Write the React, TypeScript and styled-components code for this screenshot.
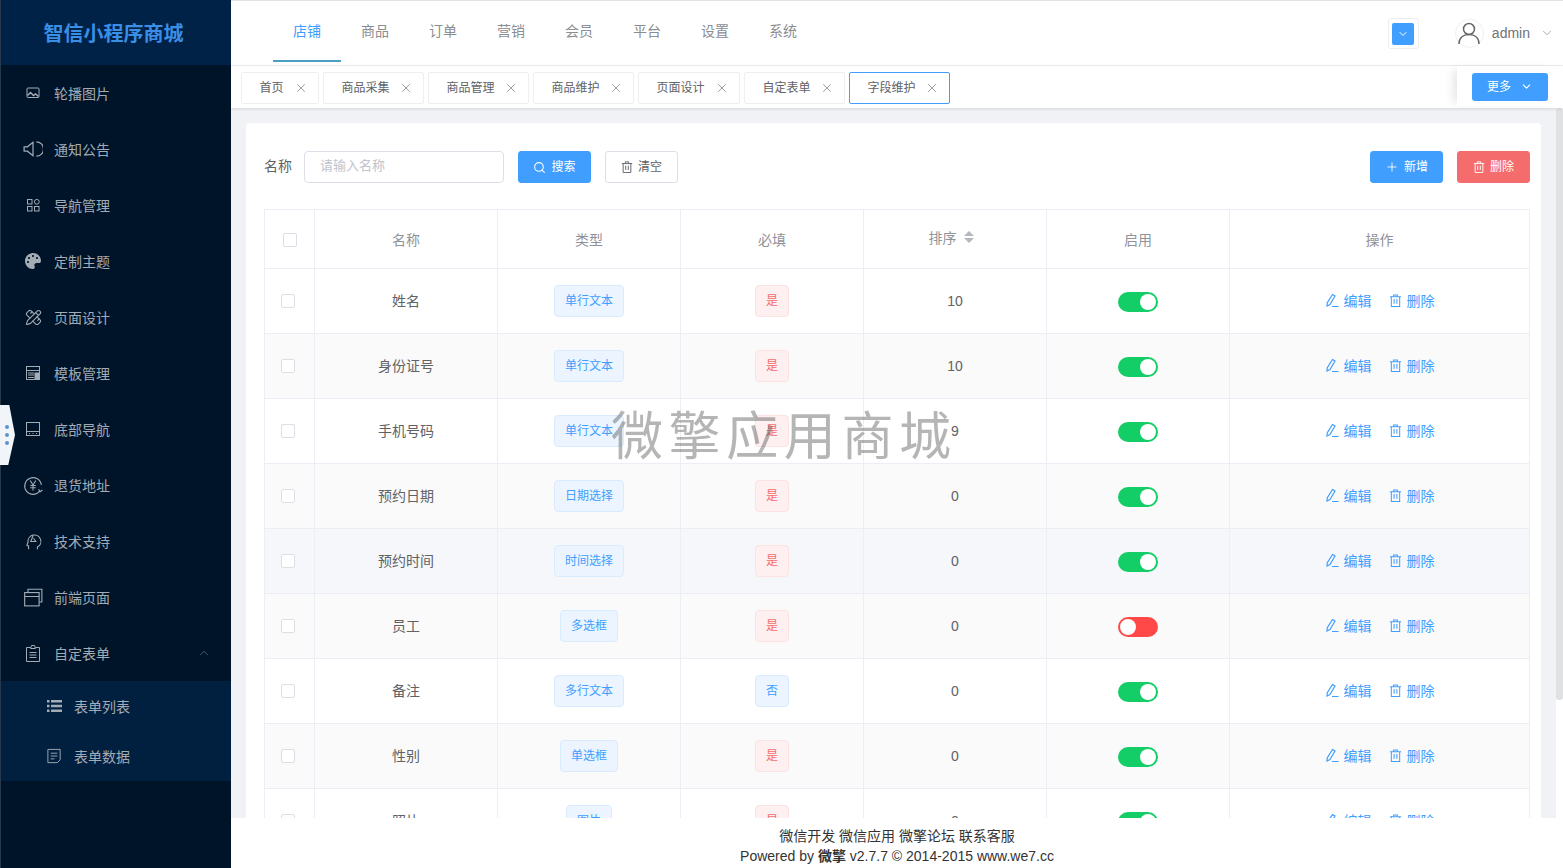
import React from "react";
import styled, { createGlobalStyle } from "styled-components";
import { ChevronDown, ChevronUp, PencilRuler, Plus, Search, X } from "lucide-react";
import { FaPalette } from "react-icons/fa";

const GlobalStyle = createGlobalStyle`
  html, body, #root {
    height: 100%;
    margin: 0;
  }
  body {
    font-family: "Liberation Sans", "Noto Sans CJK SC", sans-serif;
    font-size: 14px;
    color: #606266;
    overflow: hidden;
  }
  * {
    box-sizing: border-box;
  }
`;

const Page = styled.div`
  position: relative;
  display: flex;
  height: 868px;
  overflow: hidden;
`;

const Sidebar = styled.aside`
  flex: 0 0 231px;
  background: #001429;
  border-left: 1px solid #26384a;
`;

const Brand = styled.div`
  height: 65px;
  display: flex;
  align-items: center;
  justify-content: center;
  padding: 0 5px 1px 0;
  background: #012247;
  color: #3a8ee6;
  font-size: 20px;
  font-weight: 700;
  margin-bottom: 1px;
`;

const MenuItem = styled.div`
  height: 56px;
  display: flex;
  align-items: center;
  position: relative;
  padding: 0 0 2px 22px;
  color: #a3abb5;
`;

const MenuIcon = styled.span`
  width: 20px;
  height: 20px;
  margin-right: 11px;
  display: flex;
  align-items: center;
  justify-content: center;
  color: #a3abb5;
`;

const MenuArrow = styled.span`
  position: absolute;
  right: 20px;
  top: 20px;
  display: flex;
  color: #6d7884;
`;

const SubMenu = styled.div`
  background: #012040;
  margin-top: -1px;
`;

const SubItem = styled(MenuItem)`
  height: 50px;
  padding: 0 0 0 44px;
`;

const SubIcon = styled(MenuIcon)`
  width: 18px;
  margin-right: 11px;
`;

const Main = styled.div`
  flex: 1;
  min-width: 0;
  display: flex;
  flex-direction: column;
`;

const TopBar = styled.header`
  flex: 0 0 66px;
  display: flex;
  align-items: flex-start;
  background: #fff;
  border-top: 1px solid #e2e2e2;
  border-bottom: 1px solid #eceef1;
  padding-left: 42px;
`;

const NavItem = styled.div<{ $active?: boolean }>`
  width: 68px;
  height: 61px;
  line-height: 60px;
  text-align: center;
  color: ${({ $active }) => ($active ? "#409eff" : "#8a8d92")};
  border-bottom: 2px solid ${({ $active }) => ($active ? "#4b9fc4" : "transparent")};
`;

const TopRight = styled.div`
  margin-left: auto;
  display: flex;
  align-items: center;
  height: 64px;
  padding-right: 9px;
`;

const ThemeBox = styled.div`
  width: 31px;
  height: 31px;
  display: flex;
  align-items: center;
  justify-content: center;
  border: 1px solid #eeeeee;
  border-radius: 3px;
  margin-right: 36px;
  margin-top: 1px;
`;

const ThemeSwatch = styled.div`
  width: 22px;
  height: 22px;
  border-radius: 2px;
  background: #409eff;
  color: #fff;
  display: flex;
  align-items: center;
  justify-content: center;
`;

const Avatar = styled.div`
  width: 29px;
  height: 29px;
  border-radius: 50%;
  border: 1px solid #f0f0f0;
  display: flex;
  align-items: center;
  justify-content: center;
  margin-right: 8px;
  color: #666;
`;

const UserName = styled.span`
  color: #707276;
  margin-right: 10px;
`;

const TabBar = styled.div`
  flex: 0 0 42px;
  position: relative;
  display: flex;
  align-items: flex-start;
  gap: 4px;
  padding: 6px 0 0 10px;
  background: #fff;
  box-shadow: 0 1px 3px rgba(0, 0, 0, 0.12);
  z-index: 1;
`;

const Tab = styled.div<{ $active?: boolean; $width: number }>`
  width: ${({ $width }) => $width}px;
  height: 32px;
  display: flex;
  align-items: center;
  padding: 0 10px 3px 17.5px;
  font-size: 12px;
  color: #606266;
  border: 1px solid ${({ $active }) => ($active ? "#409eff" : "#eeeff2")};
  border-radius: 2px;
  background: #fff;
  justify-content: space-between;
`;

const TabClose = styled.span`
  display: flex;
  margin-bottom: -3px;
  color: #666;
`;

const MoreArea = styled.div`
  position: absolute;
  top: 0;
  right: 0;
  width: 106px;
  height: 40px;
  background: #fff;
  box-shadow: -8px 0 10px -4px rgba(0, 0, 0, 0.1);
  padding: 7px 0 0 15px;
`;

const MoreButton = styled.div`
  width: 76px;
  height: 28px;
  border-radius: 3px;
  background: #409eff;
  color: #fff;
  font-size: 12px;
  line-height: 16px;
  display: flex;
  align-items: center;
  justify-content: center;
  gap: 9px;
  padding-bottom: 1px;
`;

const Content = styled.div`
  flex: 1;
  min-height: 0;
  position: relative;
  overflow: hidden;
  background: #f0f2f5;
  padding: 15px 22px 0 15px;
`;

const ScrollTrack = styled.div`
  position: absolute;
  top: 0;
  right: 0;
  bottom: 0;
  width: 7px;
  background: #fff;
`;

const ScrollThumb = styled.div`
  width: 7px;
  height: 592px;
  background: #dfe1e3;
  border-radius: 3px;
`;

const Card = styled.div`
  background: #fff;
  border-radius: 4px;
  padding: 28px 11px 0 18px;
`;

const FilterRow = styled.div`
  display: flex;
  align-items: center;
  height: 32px;
  margin-bottom: 26px;
`;

const FilterLabel = styled.span`
  width: 40px;
  padding-bottom: 4px;
`;

const NameInput = styled.input`
  width: 200px;
  height: 32px;
  padding: 0 15px 3px;
  border: 1px solid #dcdfe6;
  border-radius: 4px;
  font: inherit;
  font-size: 13px;
  margin-right: 14px;
  &::placeholder {
    color: #c0c4cc;
  }
`;

const Button = styled.div<{ $kind: "primary" | "plain" | "danger" }>`
  width: 73px;
  height: 32px;
  display: flex;
  align-items: center;
  justify-content: center;
  gap: 5px;
  padding-bottom: 3px;
  font-size: 12px;
  border-radius: 3px;
  color: ${({ $kind }) => ($kind === "plain" ? "#606266" : "#fff")};
  background: ${({ $kind }) =>
    $kind === "primary" ? "#409eff" : $kind === "danger" ? "#f56c6c" : "#fff"};
  border: 1px solid
    ${({ $kind }) =>
      $kind === "primary" ? "#409eff" : $kind === "danger" ? "#f56c6c" : "#dcdfe6"};
  svg {
    margin-bottom: -3px;
  }
`;

const ClearButton = styled(Button)`
  margin-left: 14px;
`;

const RightButtons = styled.div`
  margin-left: auto;
  display: flex;
  gap: 14px;
`;

const Table = styled.table`
  width: 1265px;
  table-layout: fixed;
  border-collapse: collapse;
`;

const HeadCell = styled.th`
  height: 59px;
  padding: 0;
  font-weight: 400;
  color: #909399;
  text-align: center;
  border: 1px solid #ebeef5;
`;

const Row = styled.tr<{ $bg: string }>`
  background: ${({ $bg }) => $bg};
`;

const Cell = styled.td<{ $lift?: boolean }>`
  height: 65px;
  padding: 0 0 ${({ $lift }) => ($lift ? "2px" : "0")};
  text-align: center;
  border: 1px solid #ebeef5;
`;

const Check = styled.span`
  display: inline-block;
  width: 14px;
  height: 14px;
  vertical-align: middle;
  border: 1px solid #dcdfe6;
  border-radius: 2px;
  background: #fff;
`;

const RowCheck = styled(Check)`
  margin-right: 4px;
`;

const Tag = styled.span<{ $tone: "blue" | "red" }>`
  display: inline-block;
  height: 32px;
  line-height: 30px;
  padding: 0 10px;
  font-size: 12px;
  border-radius: 4px;
  color: ${({ $tone }) => ($tone === "blue" ? "#409eff" : "#f56c6c")};
  background: ${({ $tone }) => ($tone === "blue" ? "#ecf5ff" : "#fef0f0")};
  border: 1px solid ${({ $tone }) => ($tone === "blue" ? "#d9ecff" : "#fde2e2")};
`;

const SortHead = styled.span`
  display: inline-flex;
  align-items: center;
  gap: 7px;
  padding-right: 8px;
  position: relative;
  top: -2px;
`;

const Caret = styled.span`
  display: inline-flex;
  flex-direction: column;
  gap: 2px;
`;

const CaretUp = styled.i`
  display: block;
  border: 5px solid transparent;
  border-top: 0;
  border-bottom-color: #b4b7bd;
`;

const CaretDown = styled.i`
  display: block;
  border: 5px solid transparent;
  border-bottom: 0;
  border-top-color: #b4b7bd;
`;

const Toggle = styled.span<{ $on: boolean }>`
  display: flex;
  width: 40px;
  height: 20px;
  margin: 2px auto 0;
  padding: 2px;
  border-radius: 10px;
  background: ${({ $on }) => ($on ? "#13ce66" : "#ff4949")};
  justify-content: ${({ $on }) => ($on ? "flex-end" : "flex-start")};
`;

const Knob = styled.i`
  display: block;
  width: 16px;
  height: 16px;
  border-radius: 50%;
  background: #fff;
`;

const Actions = styled.div`
  display: flex;
  justify-content: center;
  gap: 17px;
  color: #409eff;
`;

const Action = styled.span`
  display: inline-flex;
  align-items: center;
  gap: 5px;
`;

const Footer = styled.footer`
  flex: 0 0 50px;
  background: #fff;
  padding-top: 8px;
  text-align: center;
  line-height: 20px;
  color: #333;
`;

const Watermark = styled.div`
  position: absolute;
  left: 611px;
  top: 398px;
  font-family: "Noto Sans CJK SC", sans-serif;
  font-size: 52px;
  font-weight: 400;
  line-height: 70px;
  letter-spacing: 5.6px;
  white-space: nowrap;
  color: rgba(70, 70, 70, 0.4);
  pointer-events: none;
`;

const DragHandle = styled.div`
  position: absolute;
  left: 0;
  top: 405px;
  width: 15px;
  height: 60px;
  background: #f1f5fa;
  clip-path: polygon(0 0, 62% 0, 100% 50%, 55% 100%, 0 100%);
  display: flex;
  flex-direction: column;
  align-items: center;
  justify-content: center;
  gap: 4px;
  padding-right: 1px;
`;

const DragDot = styled.i`
  width: 4px;
  height: 4px;
  border-radius: 50%;
  background: #5b93cf;
`;

type IconProps = { children: React.ReactNode; size?: number };

const Line = ({ children, size = 18 }: IconProps) => (
  <svg width={size} height={size} viewBox="0 0 18 18" fill="none" stroke="currentColor" strokeWidth="1">
    {children}
  </svg>
);

const TrashIcon = ({ size = 13 }: { size?: number }) => (
  <svg width={size} height={size} viewBox="0 0 14 14" fill="none" stroke="currentColor" strokeWidth="1.1">
    <path d="M1 3h12M5 3V1h4v2M2.5 3v10.5h9V3M5.5 5.5v5M8.5 5.5v5" />
  </svg>
);

const EditIcon = () => (
  <svg width="14" height="15" viewBox="0 0 14 15" fill="none" stroke="currentColor" strokeWidth="1.2">
    <path d="M7.5 1.5l2.5 1.5-5 8.5-3 1.5 .3-3.3zM7 13.5h6.5" />
  </svg>
);

const menu: { label: string; icon: React.ReactNode }[] = [
  {
    label: "轮播图片",
    icon: (
      <Line size={18}>
        <rect x="3" y="4" width="12" height="9.5" rx="1" />
        <path d="M3.5 11.5l3-3 3 3 2-1.5 3 2.5" strokeWidth="1.5" />
      </Line>
    ),
  },
  {
    label: "通知公告",
    icon: (
      <Line size={20}>
        <path d="M1 7v4h3l5 4V3L4 7zM12 2.5a6.5 6.5 0 0 1 0 13" strokeWidth="1.1" />
      </Line>
    ),
  },
  {
    label: "导航管理",
    icon: (
      <Line>
        <rect x="3.5" y="3.5" width="4.5" height="4.5" />
        <circle cx="12.8" cy="5.8" r="2.4" />
        <rect x="3.5" y="10.5" width="4.5" height="4.5" />
        <rect x="10.5" y="10.5" width="4.5" height="4.5" />
      </Line>
    ),
  },
  { label: "定制主题", icon: <FaPalette size={16} /> },
  { label: "页面设计", icon: <PencilRuler size={17} strokeWidth={1.5} /> },
  {
    label: "模板管理",
    icon: (
      <Line>
        <rect x="2.5" y="2.5" width="13" height="13" />
        <path d="M2.5 6.5h13M4 9h6M4 11h6M4 13.5h6" />
        <rect x="11" y="9" width="4" height="6" fill="currentColor" />
      </Line>
    ),
  },
  {
    label: "底部导航",
    icon: (
      <Line>
        <rect x="2.5" y="2.5" width="13" height="13" />
        <path d="M2.5 11.5h13M5 13.5h1M8.5 13.5h1M12 13.5h1" />
      </Line>
    ),
  },
  {
    label: "退货地址",
    icon: (
      <Line size={20}>
        <path d="M15 14.5A7.5 7.5 0 1 1 16.5 9M6.5 5l2.5 4 2.5-4M9 9v5M6.5 9.5h5M6.5 11.5h5M14 13l1.5 2 2-1.5" />
      </Line>
    ),
  },
  {
    label: "技术支持",
    icon: (
      <Line size={20}>
        <path d="M5 16.5v-3L3.5 13l1-3A5.8 5.8 0 1 1 13 14.5v2M9 4.5l-2 5h4.5L9.5 6.5" />
      </Line>
    ),
  },
  {
    label: "前端页面",
    icon: (
      <Line size={20}>
        <rect x="1.5" y="5" width="13" height="12" />
        <path d="M1.5 8.5h13M4.5 5V2h12.5v11.5h-2.5" />
      </Line>
    ),
  },
  {
    label: "自定表单",
    icon: (
      <Line>
        <path d="M6.5 3.5H2.5v14h13v-14h-4M6.5 4.5l1-3h3l1 3zM5.5 8.5h7M5.5 11h7M5.5 13.5h7" />
      </Line>
    ),
  },
];

const subMenu: { label: string; icon: React.ReactNode }[] = [
  {
    label: "表单列表",
    icon: (
      <svg width="15" height="12" viewBox="0 0 15 12" fill="currentColor">
        <path d="M0 0h2.5v2.5H0zM4 0h11v2.5H4zM0 4.7h2.5v2.5H0zM4 4.7h11v2.5H4zM0 9.4h2.5v2.5H0zM4 9.4h11v2.5H4z" />
      </svg>
    ),
  },
  {
    label: "表单数据",
    icon: (
      <Line size={17}>
        <path d="M2 1.5h13v11l-3 3H2zM5 5.5h7M5 8.5h7M5 11.5h4" />
      </Line>
    ),
  },
];

const navItems = ["店铺", "商品", "订单", "营销", "会员", "平台", "设置", "系统"];

const tabs = [
  { label: "首页", width: 78 },
  { label: "商品采集", width: 101 },
  { label: "商品管理", width: 101 },
  { label: "商品维护", width: 101 },
  { label: "页面设计", width: 102 },
  { label: "自定表单", width: 101 },
  { label: "字段维护", width: 101, active: true },
];

const rows = [
  { name: "姓名", type: "单行文本", must: "是", sort: 10, on: true },
  { name: "身份证号", type: "单行文本", must: "是", sort: 10, on: true },
  { name: "手机号码", type: "单行文本", must: "是", sort: 9, on: true },
  { name: "预约日期", type: "日期选择", must: "是", sort: 0, on: true },
  { name: "预约时间", type: "时间选择", must: "是", sort: 0, on: true },
  { name: "员工", type: "多选框", must: "是", sort: 0, on: false },
  { name: "备注", type: "多行文本", must: "否", sort: 0, on: true },
  { name: "性别", type: "单选框", must: "是", sort: 0, on: true },
  { name: "照片", type: "图片", must: "是", sort: 0, on: true },
];

const rowBg = (index: number) => {
  if (index === 4) return "#f5f7fa";
  return index % 2 === 1 ? "#fafafa" : "#fff";
};

export default function App() {
  return (
    <Page>
      <GlobalStyle />
      <Sidebar>
        <Brand>智信小程序商城</Brand>
        {menu.map((item) => (
          <MenuItem key={item.label}>
            <MenuIcon>{item.icon}</MenuIcon>
            {item.label}
            {item.label === "自定表单" && (
              <MenuArrow>
                <ChevronUp size={14} strokeWidth={1.2} />
              </MenuArrow>
            )}
          </MenuItem>
        ))}
        <SubMenu>
          {subMenu.map((item) => (
            <SubItem key={item.label}>
              <SubIcon>{item.icon}</SubIcon>
              {item.label}
            </SubItem>
          ))}
        </SubMenu>
      </Sidebar>
      <Main>
        <TopBar>
          {navItems.map((item, i) => (
            <NavItem key={item} $active={i === 0}>
              {item}
            </NavItem>
          ))}
          <TopRight>
            <ThemeBox>
              <ThemeSwatch>
                <ChevronDown size={12} />
              </ThemeSwatch>
            </ThemeBox>
            <Avatar>
              <svg width="24" height="24" viewBox="0 0 24 24" fill="none" stroke="currentColor" strokeWidth="1.5">
                <circle cx="12" cy="8" r="5.5" />
                <path d="M2 23c0-6 4-9.5 10-9.5S22 17 22 23" />
              </svg>
            </Avatar>
            <UserName>admin</UserName>
            <ChevronDown size={14} strokeWidth={1.2} color="#888" />
          </TopRight>
        </TopBar>
        <TabBar>
          {tabs.map((tab) => (
            <Tab key={tab.label} $width={tab.width} $active={tab.active}>
              {tab.label}
              <TabClose>
                <X size={14} strokeWidth={1.1} />
              </TabClose>
            </Tab>
          ))}
          <MoreArea>
            <MoreButton>
              更多
              <ChevronDown size={13} />
            </MoreButton>
          </MoreArea>
        </TabBar>
        <Content>
          <ScrollTrack>
            <ScrollThumb />
          </ScrollTrack>
          <Card>
            <FilterRow>
              <FilterLabel>名称</FilterLabel>
              <NameInput placeholder="请输入名称" readOnly />
              <Button $kind="primary">
                <Search size={13} />
                搜索
              </Button>
              <ClearButton $kind="plain">
                <TrashIcon size={12} />
                清空
              </ClearButton>
              <RightButtons>
                <Button $kind="primary">
                  <Plus size={14} strokeWidth={1.5} />
                  新增
                </Button>
                <Button $kind="danger">
                  <TrashIcon size={12} />
                  删除
                </Button>
              </RightButtons>
            </FilterRow>
            <Table>
              <colgroup>
                <col width="50" />
                <col width="183" />
                <col width="183" />
                <col width="183" />
                <col width="183" />
                <col width="183" />
                <col width="300" />
              </colgroup>
              <thead>
                <tr>
                  <HeadCell>
                    <Check />
                  </HeadCell>
                  <HeadCell>名称</HeadCell>
                  <HeadCell>类型</HeadCell>
                  <HeadCell>必填</HeadCell>
                  <HeadCell>
                    <SortHead>
                      排序
                      <Caret>
                        <CaretUp />
                        <CaretDown />
                      </Caret>
                    </SortHead>
                  </HeadCell>
                  <HeadCell>启用</HeadCell>
                  <HeadCell>操作</HeadCell>
                </tr>
              </thead>
              <tbody>
                {rows.map((row, i) => (
                  <Row key={row.name} $bg={rowBg(i)}>
                    <Cell $lift>
                      <RowCheck />
                    </Cell>
                    <Cell $lift>{row.name}</Cell>
                    <Cell>
                      <Tag $tone="blue">{row.type}</Tag>
                    </Cell>
                    <Cell>
                      <Tag $tone={row.must === "是" ? "red" : "blue"}>{row.must}</Tag>
                    </Cell>
                    <Cell>{row.sort}</Cell>
                    <Cell>
                      <Toggle $on={row.on}>
                        <Knob />
                      </Toggle>
                    </Cell>
                    <Cell $lift>
                      <Actions>
                        <Action>
                          <EditIcon />
                          编辑
                        </Action>
                        <Action>
                          <TrashIcon />
                          删除
                        </Action>
                      </Actions>
                    </Cell>
                  </Row>
                ))}
              </tbody>
            </Table>
          </Card>
        </Content>
        <Footer>
          <div>微信开发 微信应用 微擎论坛 联系客服</div>
          <div>
            Powered by <b>微擎</b> v2.7.7 © 2014-2015 www.we7.cc
          </div>
        </Footer>
      </Main>
      <Watermark>微擎应用商城</Watermark>
      <DragHandle>
        <DragDot />
        <DragDot />
        <DragDot />
      </DragHandle>
    </Page>
  );
}
